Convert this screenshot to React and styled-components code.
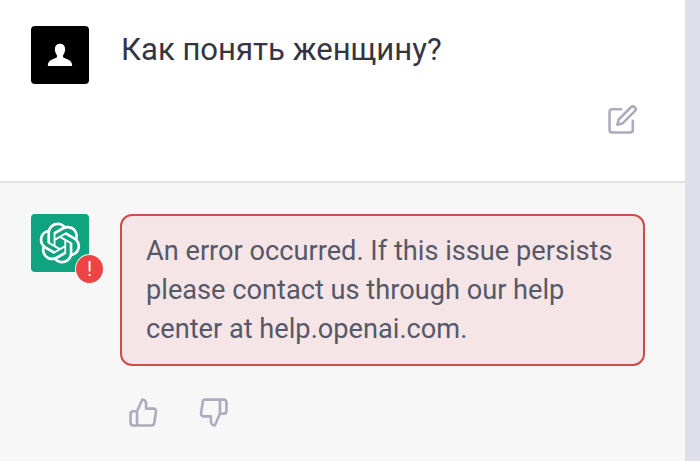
import styled, { createGlobalStyle } from 'styled-components';
import { FiEdit, FiThumbsDown, FiThumbsUp } from 'react-icons/fi';

const GlobalStyle = createGlobalStyle`
  * {
    box-sizing: border-box;
  }
  body {
    margin: 0;
    background: #dfdfe9;
    font-family: Roboto, sans-serif;
  }
`;

const Chat = styled.main`
  display: flex;
  flex-direction: column;
  width: 685px;
  height: 461px;
  overflow: hidden;
`;

const Message = styled.section`
  display: flex;
  align-items: flex-start;
  gap: 31px;
  padding: ${({ $bot }) => ($bot ? '31px 40px 0 31px' : '26px 40px 0 31px')};
  height: ${({ $bot }) => ($bot ? '278px' : '183px')};
  background: ${({ $bot }) => ($bot ? '#f7f7f7' : '#fff')};
  border-bottom: ${({ $bot }) => ($bot ? 'none' : '2px solid #e2e2e3')};
`;

const Avatar = styled.div`
  position: relative;
  display: flex;
  align-items: center;
  justify-content: center;
  flex: none;
  width: 58px;
  height: 58px;
  border-radius: 4px;
  background: ${({ $color }) => $color};
`;

const Badge = styled.span`
  position: absolute;
  right: -15px;
  bottom: -12px;
  display: flex;
  align-items: center;
  justify-content: center;
  width: 29px;
  height: 30px;
  border: 1.5px solid #fff;
  border-radius: 50%;
  background: #ef4444;
  color: #fff;
  font-size: 20px;
  line-height: 1;
`;

const Body = styled.div`
  display: flex;
  flex-direction: column;
  flex: 1;
`;

const Question = styled.p`
  margin: 0;
  padding: 1px 0 0 1px;
  height: 78px;
  color: #343541;
  font-size: 31.1px;
  line-height: 46px;
  white-space: nowrap;
`;

const ErrorBox = styled.div`
  width: 525px;
  height: 152px;
  padding: 16px 24px 0;
  border: 2px solid #cf4a4c;
  border-radius: 12px;
  background: #f5e5e6;
  color: #565869;
  font-size: 27.2px;
  line-height: 39px;
  white-space: nowrap;
`;

const Actions = styled.div`
  display: flex;
  justify-content: ${({ $end }) => ($end ? 'flex-end' : 'flex-start')};
  gap: 39px;
  padding: ${({ $end }) => ($end ? '0 7px 0 0' : '31px 0 0 8px')};
`;

const IconButton = styled.button`
  display: flex;
  padding: 0;
  border: 0;
  background: none;
  color: #acacbe;
  font-size: 31px;
`;

function UserIcon() {
  return (
    <svg width="26" height="24" viewBox="0 0 26 24" fill="#fff">
      <path d="M13 .8C9.700.8 7.900 2.800 7.900 6c0 2.800.8 4.600 1.900 6 .5 1.500.3 2.600-1 3.100C4.600 16.700 1 17.600.8 23h24.400c-.2-5.400-3.800-6.300-8-7.900-1.300-.5-1.500-1.600-1-3.100 1.100-1.400 1.900-3.200 1.900-6C18.100 2.800 16.300.8 13 .8z" />
    </svg>
  );
}

function Logo() {
  return (
    <svg width="42" height="42" viewBox="0 0 41 41" fill="#fff">
      <path d="M37.532 16.8707C37.9808 15.5241 38.1363 14.0974 37.9886 12.6859C37.8409 11.2744 37.3934 9.91076 36.676 8.68622C35.6126 6.83404 33.9882 5.3676 32.0373 4.4985C30.0864 3.62941 27.9098 3.40259 25.8215 3.85078C24.8796 2.7893 23.7219 1.94125 22.4257 1.36341C21.1295 0.785575 19.7249 0.491269 18.3058 0.500197C16.1708 0.495044 14.0893 1.16803 12.3614 2.42214C10.6335 3.67624 9.34853 5.44666 8.6917 7.47815C7.30085 7.76286 5.98686 8.3414 4.8377 9.17505C3.68854 10.0087 2.73073 11.0782 2.02839 12.312C0.956464 14.1591 0.498905 16.2988 0.721698 18.4228C0.944492 20.5467 1.83612 22.5449 3.268 24.1293C2.81966 25.4759 2.66413 26.9026 2.81182 28.3141C2.95951 29.7256 3.40701 31.0892 4.12437 32.3138C5.18791 34.1659 6.8123 35.6322 8.76321 36.5013C10.7141 37.3704 12.8907 37.5973 14.9789 37.1492C15.9208 38.2107 17.0786 39.0587 18.3747 39.6366C19.6709 40.2144 21.0755 40.5087 22.4946 40.4998C24.6307 40.5054 26.7133 39.8321 28.4418 38.5772C30.1704 37.3223 31.4556 35.5506 32.1119 33.5179C33.5027 33.2332 34.8167 32.6547 35.9659 31.821C37.115 30.9874 38.0728 29.9178 38.7752 28.684C39.8458 26.8371 40.3023 24.6979 40.0789 22.5748C39.8556 20.4517 38.9639 18.4544 37.532 16.8707ZM22.4978 37.8849C20.7443 37.8874 19.0459 37.2733 17.6994 36.1501C17.7601 36.117 17.8666 36.0586 17.936 36.0161L25.9004 31.4156C26.1003 31.3019 26.2663 31.137 26.3813 30.9378C26.4964 30.7386 26.5563 30.5124 26.5549 30.2825V19.0542L29.9213 20.998C29.9389 21.0068 29.9541 21.0198 29.9656 21.0359C29.977 21.052 29.9842 21.0707 29.9867 21.0902V30.3889C29.9842 32.375 29.1946 34.2791 27.7909 35.6841C26.3872 37.0892 24.4838 37.8806 22.4978 37.8849ZM6.39227 31.0064C5.51397 29.4888 5.19742 27.7107 5.49804 25.9832C5.55718 26.0187 5.66048 26.0818 5.73461 26.1244L13.699 30.7248C13.8975 30.8408 14.1233 30.902 14.3532 30.902C14.583 30.902 14.8088 30.8408 15.0073 30.7248L24.731 25.1103V28.9979C24.7321 29.0177 24.7283 29.0376 24.7199 29.0556C24.7115 29.0736 24.6988 29.0893 24.6829 29.1012L16.6317 33.7497C14.9096 34.7416 12.8643 35.0097 10.9447 34.4954C9.02506 33.9811 7.38785 32.7263 6.39227 31.0064ZM4.29707 13.6194C5.17156 12.0998 6.55279 10.9364 8.19885 10.3327C8.19885 10.4013 8.19491 10.5228 8.19491 10.6071V19.808C8.19351 20.0378 8.25334 20.2638 8.36823 20.4629C8.48312 20.6619 8.64893 20.8267 8.84863 20.9404L18.5723 26.5542L15.206 28.4979C15.1894 28.5089 15.1703 28.5155 15.1505 28.5173C15.1307 28.5191 15.1107 28.516 15.0924 28.5082L7.04046 23.8557C5.32135 22.8601 4.06716 21.2235 3.55289 19.3046C3.03862 17.3858 3.30624 15.3413 4.29707 13.6194ZM31.955 20.0556L22.2312 14.4411L25.5976 12.4981C25.6142 12.4872 25.6333 12.4805 25.6531 12.4787C25.6729 12.4769 25.6928 12.4801 25.7111 12.4879L33.7631 17.1364C34.9967 17.849 36.0017 18.8982 36.6606 20.1613C37.3194 21.4244 37.6047 22.849 37.4832 24.2684C37.3617 25.6878 36.8382 27.0432 35.9743 28.1759C35.1103 29.3086 33.9415 30.1717 32.6047 30.6641C32.6047 30.5947 32.6047 30.4733 32.6047 30.3889V21.188C32.6066 20.9586 32.5474 20.7328 32.4332 20.5338C32.319 20.3348 32.154 20.1698 31.955 20.0556ZM35.3055 15.0128C35.2464 14.9765 35.1431 14.9142 35.069 14.8717L27.1045 10.2712C26.906 10.1554 26.6803 10.0943 26.4504 10.0943C26.2206 10.0943 25.9948 10.1554 25.7963 10.2712L16.0726 15.8858V11.9982C16.0715 11.9783 16.0753 11.9585 16.0837 11.9405C16.0921 11.9225 16.1048 11.9068 16.1207 11.8949L24.1719 7.25025C25.4053 6.53903 26.8158 6.19376 28.2383 6.25482C29.6608 6.31589 31.0364 6.78077 32.2044 7.59508C33.3723 8.40939 34.2842 9.53945 34.8334 10.8531C35.3826 12.1667 35.5464 13.6095 35.3055 15.0128ZM14.2424 21.9419L10.8752 19.9981C10.8576 19.9893 10.8423 19.9763 10.8309 19.9602C10.8195 19.9441 10.8122 19.9254 10.8098 19.9058V10.6071C10.8107 9.18295 11.2173 7.78848 11.9819 6.58696C12.7466 5.38544 13.8377 4.42659 15.1275 3.82264C16.4173 3.21869 17.8524 2.99464 19.2649 3.1767C20.6775 3.35876 22.0089 3.93941 23.1034 4.85067C23.0427 4.88379 22.937 4.94215 22.8668 4.98473L14.9024 9.58517C14.7025 9.69878 14.5366 9.86356 14.4215 10.0626C14.3065 10.2616 14.2466 10.4877 14.2479 10.7175L14.2424 21.9419ZM16.071 17.9991L20.4018 15.4978L24.7325 17.9975V22.9985L20.4018 25.4983L16.071 22.9985V17.9991Z" />
    </svg>
  );
}

export default function App() {
  return (
    <>
      <GlobalStyle />
      <Chat>
        <Message>
          <Avatar $color="#000">
            <UserIcon />
          </Avatar>
          <Body>
            <Question>Как понять женщину?</Question>
            <Actions $end>
              <IconButton aria-label="Edit">
                <FiEdit />
              </IconButton>
            </Actions>
          </Body>
        </Message>
        <Message $bot>
          <Avatar $color="#10a37f">
            <Logo />
            <Badge>!</Badge>
          </Avatar>
          <Body>
            <ErrorBox>
              An error occurred. If this issue persists
              <br />
              please contact us through our help
              <br />
              center at help.openai.com.
            </ErrorBox>
            <Actions>
              <IconButton aria-label="Good response">
                <FiThumbsUp />
              </IconButton>
              <IconButton aria-label="Bad response">
                <FiThumbsDown />
              </IconButton>
            </Actions>
          </Body>
        </Message>
      </Chat>
    </>
  );
}
